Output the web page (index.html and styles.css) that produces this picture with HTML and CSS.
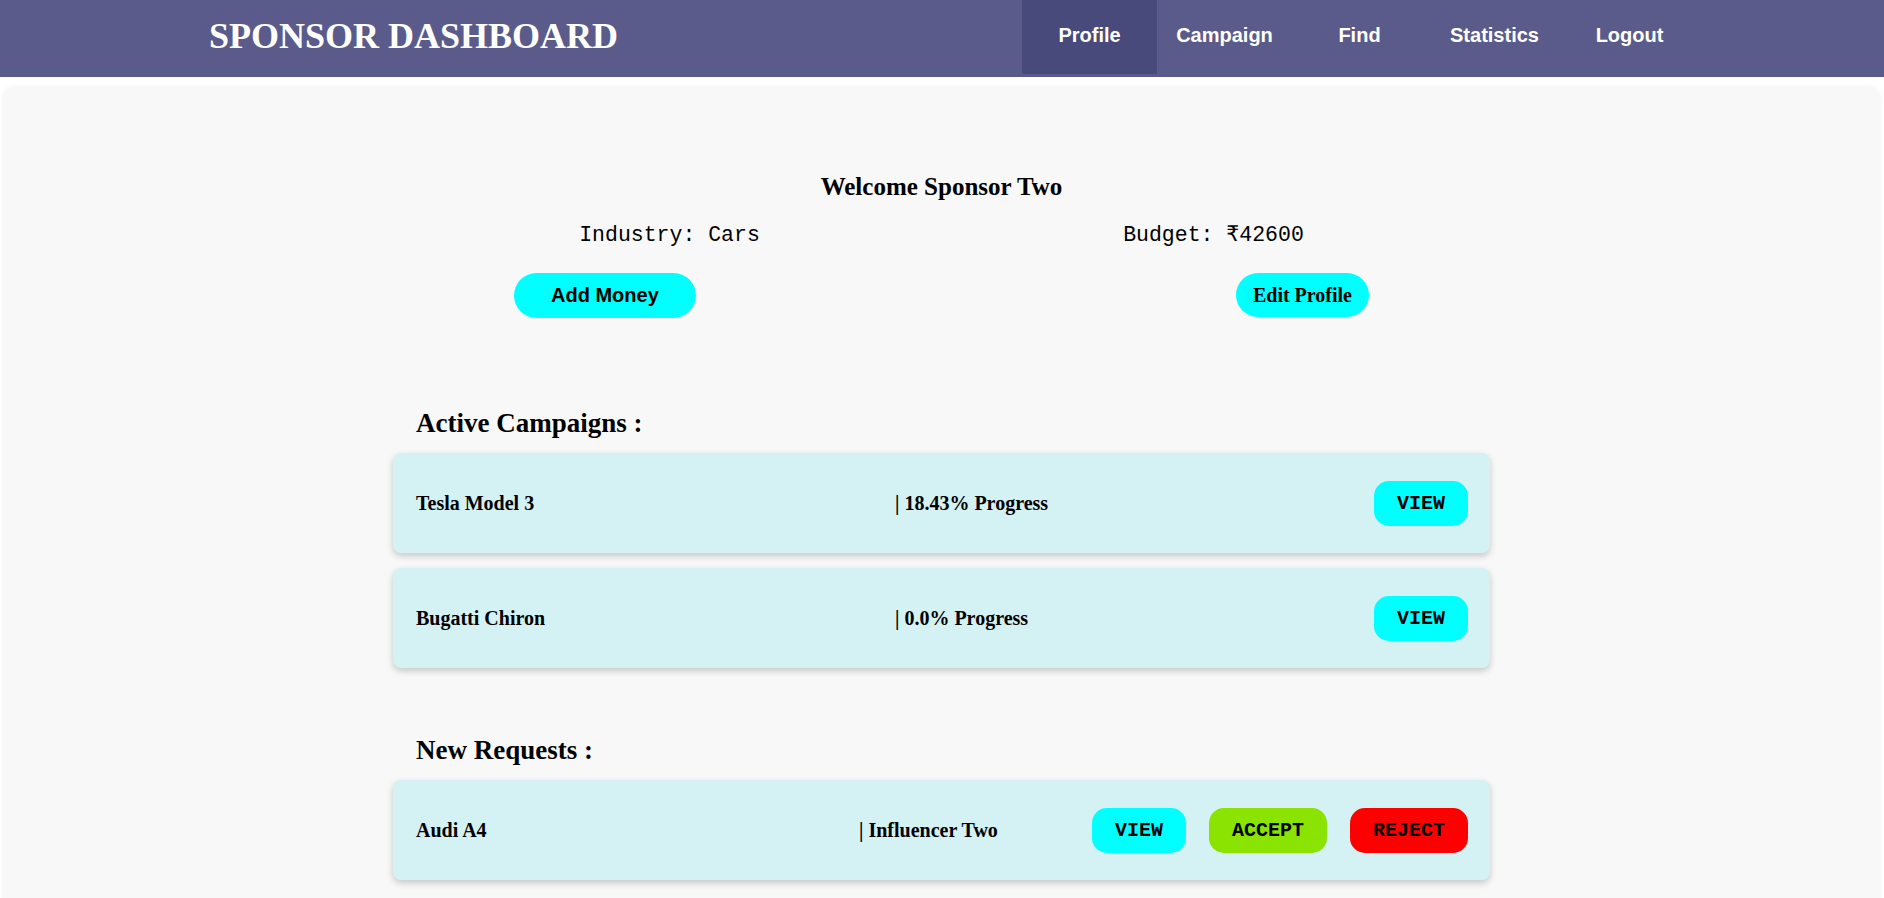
FILE: index.html
```html
<!DOCTYPE html>
<html lang="en">
<head>
<meta charset="utf-8">
<title>Sponsor Dashboard</title>
<link rel="stylesheet" href="styles.css">
</head>
<body>
<header class="navbar">
  <h1 class="brand">SPONSOR DASHBOARD</h1>
  <nav class="nav">
    <a class="nav-item active" href="#">Profile</a>
    <a class="nav-item" href="#">Campaign</a>
    <a class="nav-item" href="#">Find</a>
    <a class="nav-item" href="#">Statistics</a>
    <a class="nav-item" href="#">Logout</a>
  </nav>
</header>
<main class="panel">
  <h2 class="welcome">Welcome Sponsor Two</h2>
  <div class="info-row">
    <div class="info-cell">Industry: Cars</div>
    <div class="info-cell">Budget: ₹42600</div>
  </div>
  <div class="action-row">
    <button class="btn-add">Add Money</button>
    <button class="btn-edit">Edit Profile</button>
  </div>

  <section class="section">
    <h3 class="section-title">Active Campaigns :</h3>
    <div class="card">
      <div class="col-flex">Tesla Model 3</div>
      <div class="col-flex">| 18.43% Progress</div>
      <button class="pill pill-view">VIEW</button>
    </div>
    <div class="card">
      <div class="col-flex">Bugatti Chiron</div>
      <div class="col-flex">| 0.0% Progress</div>
      <button class="pill pill-view">VIEW</button>
    </div>
  </section>

  <section class="section section-requests">
    <h3 class="section-title">New Requests :</h3>
    <div class="card">
      <div class="col-name">Audi A4</div>
      <div class="col-flex">| Influencer Two</div>
      <div class="btn-group">
        <button class="pill pill-view">VIEW</button>
        <button class="pill pill-accept">ACCEPT</button>
        <button class="pill pill-reject">REJECT</button>
      </div>
    </div>
  </section>
</main>
</body>
</html>
```
FILE: styles.css
```css
* { box-sizing: border-box; }

body {
  margin: 0;
  background: #ffffff;
  font-family: "Liberation Serif", "Times New Roman", serif;
  color: #000;
}

.navbar {
  display: flex;
  align-items: flex-start;
  height: 77px;
  background: #5a5b8a;
  padding: 0 187px 0 209px;
}

.brand {
  margin: 0;
  font-size: 36px;
  font-weight: bold;
  color: #ffffff;
  line-height: 41px;
  padding-top: 16px;
}

.nav {
  display: flex;
  margin-left: auto;
}

.nav-item {
  display: flex;
  align-items: center;
  justify-content: center;
  width: 135px;
  height: 74px;
  padding-bottom: 4px;
  font-family: "Liberation Sans", Arial, sans-serif;
  font-weight: bold;
  font-size: 20px;
  color: #ffffff;
  text-decoration: none;
}

.nav-item.active {
  background: #474a7a;
}

.panel {
  margin: 11px 5px 0 4px;
  background: #f8f8f8;
  border-radius: 10px;
  box-shadow: 0 0 6px rgba(0, 0, 0, 0.08);
  padding: 84px 0 60px;
}

.welcome {
  margin: 0;
  text-align: center;
  font-size: 25px;
  line-height: 29px;
  font-weight: bold;
}

.info-row {
  display: flex;
  width: 1088px;
  margin: 22px auto 0;
}

.info-cell {
  flex: 1;
  text-align: center;
  font-family: "Liberation Mono", "Courier New", "DejaVu Sans Mono", monospace;
  font-size: 21.5px;
  line-height: 24px;
}

.action-row {
  display: flex;
  justify-content: space-between;
  align-items: flex-start;
  width: 855px;
  margin: 26px auto 0;
}

.btn-add {
  height: 45px;
  padding: 0 37px;
  border: none;
  border-radius: 23px;
  background: #00ffff;
  font-family: "Liberation Sans", Arial, sans-serif;
  font-weight: bold;
  font-size: 20px;
  color: #000;
}

.btn-edit {
  height: 44px;
  padding: 0 17px;
  border: none;
  border-radius: 22px;
  background: #00ffff;
  font-family: "Liberation Serif", "Times New Roman", serif;
  font-weight: bold;
  font-size: 20px;
  color: #000;
}

.section {
  width: 1097px;
  margin: 90px auto 0;
}

.section-requests {
  margin-top: 67px;
}

.section-title {
  margin: 0 0 14px;
  padding-left: 23px;
  font-size: 27px;
  line-height: 31px;
  font-weight: bold;
}

.card {
  display: flex;
  align-items: center;
  height: 100px;
  padding: 0 22px 0 23px;
  margin-bottom: 15px;
  background: #d4f1f4;
  border-radius: 8px;
  box-shadow: 0 3px 7px rgba(0, 0, 0, 0.2);
  font-size: 20px;
  font-weight: bold;
}

.col-flex {
  flex: 1;
}

.col-name {
  width: 443px;
}

.btn-group {
  display: flex;
  gap: 23px;
}

.pill {
  height: 45px;
  padding: 0 23px;
  border: none;
  border-radius: 15px;
  font-family: "Liberation Mono", "Courier New", monospace;
  font-weight: bold;
  font-size: 20px;
  color: #000;
}

.pill-view { background: #00ffff; }
.pill-accept { background: #8ae300; }
.pill-reject { background: #ff0000; }
```
